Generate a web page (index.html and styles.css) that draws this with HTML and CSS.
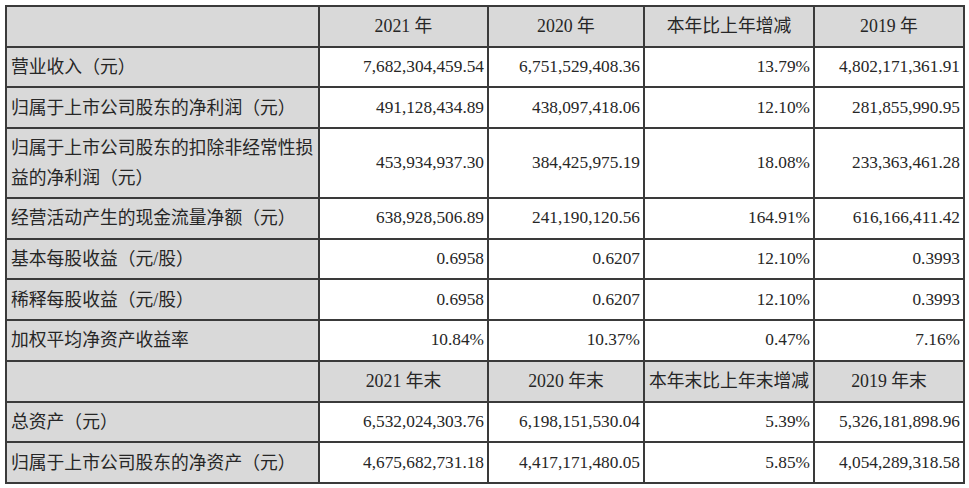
FILE: index.html
```html
<!DOCTYPE html>
<html lang="zh-CN">
<head>
<meta charset="utf-8">
<title>主要会计数据</title>
<link rel="stylesheet" href="styles.css">
</head>
<body>
<table class="fin">
  <colgroup>
    <col class="c-label">
    <col class="c-y1">
    <col class="c-y2">
    <col class="c-chg">
    <col class="c-y3">
  </colgroup>
  <tr class="head">
    <td class="label"></td>
    <td>2021 年</td>
    <td>2020 年</td>
    <td>本年比上年增减</td>
    <td>2019 年</td>
  </tr>
  <tr>
    <td class="label">营业收入（元）</td>
    <td class="num">7,682,304,459.54</td>
    <td class="num">6,751,529,408.36</td>
    <td class="num">13.79%</td>
    <td class="num">4,802,171,361.91</td>
  </tr>
  <tr>
    <td class="label">归属于上市公司股东的净利润（元）</td>
    <td class="num">491,128,434.89</td>
    <td class="num">438,097,418.06</td>
    <td class="num">12.10%</td>
    <td class="num">281,855,990.95</td>
  </tr>
  <tr class="tall">
    <td class="label">归属于上市公司股东的扣除非经常性损<br>益的净利润（元）</td>
    <td class="num">453,934,937.30</td>
    <td class="num">384,425,975.19</td>
    <td class="num">18.08%</td>
    <td class="num">233,363,461.28</td>
  </tr>
  <tr>
    <td class="label">经营活动产生的现金流量净额（元）</td>
    <td class="num">638,928,506.89</td>
    <td class="num">241,190,120.56</td>
    <td class="num">164.91%</td>
    <td class="num">616,166,411.42</td>
  </tr>
  <tr>
    <td class="label">基本每股收益（元/股）</td>
    <td class="num">0.6958</td>
    <td class="num">0.6207</td>
    <td class="num">12.10%</td>
    <td class="num">0.3993</td>
  </tr>
  <tr>
    <td class="label">稀释每股收益（元/股）</td>
    <td class="num">0.6958</td>
    <td class="num">0.6207</td>
    <td class="num">12.10%</td>
    <td class="num">0.3993</td>
  </tr>
  <tr>
    <td class="label">加权平均净资产收益率</td>
    <td class="num">10.84%</td>
    <td class="num">10.37%</td>
    <td class="num">0.47%</td>
    <td class="num">7.16%</td>
  </tr>
  <tr class="head">
    <td class="label"></td>
    <td>2021 年末</td>
    <td>2020 年末</td>
    <td class="tight">本年末比上年末增减</td>
    <td>2019 年末</td>
  </tr>
  <tr>
    <td class="label">总资产（元）</td>
    <td class="num">6,532,024,303.76</td>
    <td class="num">6,198,151,530.04</td>
    <td class="num">5.39%</td>
    <td class="num">5,326,181,898.96</td>
  </tr>
  <tr>
    <td class="label">归属于上市公司股东的净资产（元）</td>
    <td class="num">4,675,682,731.18</td>
    <td class="num">4,417,171,480.05</td>
    <td class="num">5.85%</td>
    <td class="num">4,054,289,318.58</td>
  </tr>
</table>
</body>
</html>
```

FILE: styles.css
```css
html, body {
  margin: 0;
  padding: 0;
  background: #ffffff;
}

body {
  padding: 5px 0 0 5px;
  font-family: "Liberation Serif", "Noto Sans CJK SC", serif;
  font-size: 17.3px;
  color: #262626;
}

.fin {
  border-collapse: collapse;
  table-layout: fixed;
  width: 958px;
}

.c-label { width: 313px; }
.c-y1 { width: 169px; }
.c-y2 { width: 156px; }
.c-chg { width: 170px; }
.c-y3 { width: 150px; }

.fin td {
  border: 2px solid #3a3a3a;
  height: 38.7px;
  padding: 0 3px;
  vertical-align: middle;
  white-space: nowrap;
  line-height: 30px;
}

.fin tr.tall td {
  height: 68px;
}

.fin td.label {
  background: #d9d9d9;
  text-align: left;
  padding-left: 4px;
  font-size: 17.8px;
}

.fin tr.head td {
  background: #d9d9d9;
  text-align: center;
  font-size: 17.8px;
}

.fin td.num {
  text-align: right;
}

.fin td.tight {
  padding: 0;
}
```
